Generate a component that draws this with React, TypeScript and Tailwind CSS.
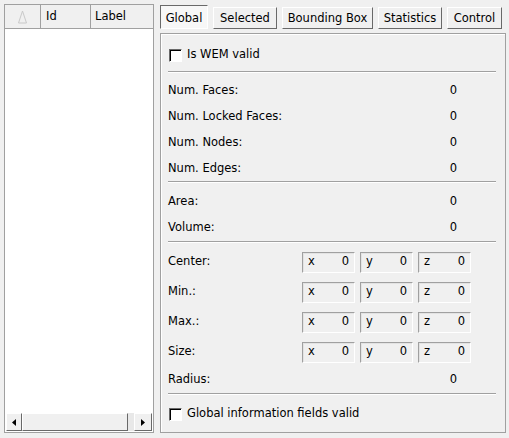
import React from "react";

const font = { fontFamily: "Tahoma, 'DejaVu Sans', 'Liberation Sans', sans-serif" };

function Raised({ children, className = "" }: { children?: React.ReactNode; className?: string }) {
  return (
    <div className={"border border-t-white border-l-white border-r-[#696969] border-b-[#696969] bg-[#f0f0f0] " + className}>
      {children}
    </div>
  );
}

function Check({ label }: { label: string }) {
  return (
    <div className="flex items-center h-[26px]">
      <div className="w-[13px] h-[13px] border border-t-[#696969] border-l-[#696969] border-r-white border-b-white bg-white ml-[1px] shadow-[inset_1px_1px_0_#000]" />
      <span className="ml-[5px]">{label}</span>
    </div>
  );
}

function Sep() {
  return <div className="h-[2px] border-t border-t-[#a0a0a0] border-b border-b-white mr-[2px]" />;
}

function Row({ label, value = "0" }: { label: string; value?: string }) {
  return (
    <div className="flex items-center h-[26px]">
      <span className="w-[269px]">{label}</span>
      <span className="w-[20px] text-right">{value}</span>
    </div>
  );
}

function VBox({ axis }: { axis: string }) {
  return (
    <div className="w-[53px] h-[21px] flex items-center justify-between px-[5px] border border-t-[#a0a0a0] border-l-[#a0a0a0] border-r-white border-b-white shadow-[inset_1px_1px_0_#e3e3e3]">
      <span>{axis}</span>
      <span>0</span>
    </div>
  );
}

function VecRow({ label }: { label: string }) {
  return (
    <div className="flex items-center h-[30px]">
      <span className="w-[134px]">{label}</span>
      <div className="flex gap-[5px]">
        <VBox axis="x" />
        <VBox axis="y" />
        <VBox axis="z" />
      </div>
    </div>
  );
}

function Tab({ label, w, active }: { label: string; w: number; active?: boolean }) {
  return (
    <div
      style={{ width: w }}
      className={
        "flex items-center justify-center border " +
        (active
          ? "border-t-[#696969] border-l-[#696969] border-r-white border-b-white bg-[#f7f7f7] h-[24px]"
          : "h-[22px] border-t-white border-l-white border-r-[#696969] border-b-[#696969] bg-[#f0f0f0]")
      }
    >
      <span className={active ? "mt-[3px]" : "mt-[1px]"}>{label}</span>
    </div>
  );
}

export default function App() {
  return (
    <div style={font} className="w-[509px] h-[438px] bg-[#f0f0f0] text-[11.5px] text-black flex pt-[4px] pl-[4px] overflow-hidden">
      {/* Left list */}
      <div className="w-[150px] h-[429px] flex flex-col border border-[#a0a0a0] bg-white">
        <div className="flex h-[24px] bg-[#f0f0f0] border-b border-b-[#a0a0a0]">
          <div className="w-[36px] border-r border-r-[#a0a0a0] flex items-center justify-center">
            <svg width="9" height="14" viewBox="0 0 9 14"><path d="M4.5 1 L0.5 13 M4.5 1 L8.5 13 M0.5 13 H8.5" stroke="#c8c8c8" fill="none" strokeWidth="1" /></svg>
          </div>
          <div className="w-[50px] border-r border-r-[#a0a0a0] flex items-center pl-[5px] pt-[1px]">Id</div>
          <div className="flex-1 flex items-center pl-[4px] pt-[1px]">Label</div>
        </div>
        <div className="flex-1" />
        <div className="flex h-[18px] mb-[1px] mx-[1px] bg-[#f0f0f0]">
          <Raised className="w-[16px] h-[18px] flex items-center justify-center">
            <svg width="4" height="7" viewBox="0 0 4 7"><path d="M4 0 L0 3.5 L4 7Z" fill="#000" /></svg>
          </Raised>
          <Raised className="w-[106px] h-[18px]" />
          <div className="flex-1 bg-[#e8e8e8]" />
          <Raised className="w-[18px] h-[18px] flex items-center justify-center">
            <svg width="4" height="7" viewBox="0 0 4 7"><path d="M0 0 L4 3.5 L0 7Z" fill="#000" /></svg>
          </Raised>
        </div>
      </div>

      {/* Right side */}
      <div className="ml-[6px] flex flex-col">
        <div className="flex items-start gap-[5px] h-[29px] pt-[1px]">
          <Tab label="Global" w={48} active />
          <div className="mt-[2px] flex gap-[5px]">
            <Tab label="Selected" w={64} />
            <Tab label="Bounding Box" w={91} />
            <Tab label="Statistics" w={64} />
            <Tab label="Control" w={55} />
          </div>
        </div>
        <div className="w-[346px] h-[400px] border border-[#a0a0a0] shadow-[inset_1px_1px_0_white] px-[7px] pt-[8px] flex flex-col">
          <Check label="Is WEM valid" />
          <div className="mt-[3px]"><Sep /></div>
          <div className="mt-[5px]">
            <Row label="Num. Faces:" />
            <Row label="Num. Locked Faces:" />
            <Row label="Num. Nodes:" />
            <Row label="Num. Edges:" />
          </div>
          <div className="-mt-px"><Sep /></div>
          <div className="mt-[6px]">
            <Row label="Area:" />
            <Row label="Volume:" />
          </div>
          <div className="mt-0"><Sep /></div>
          <div className="mt-[4px]">
            <VecRow label="Center:" />
            <VecRow label="Min.:" />
            <VecRow label="Max.:" />
            <VecRow label="Size:" />
            <Row label="Radius:" />
          </div>
          <div className="mt-0"><Sep /></div>
          <div className="mt-[6px]">
            <Check label="Global information fields valid" />
          </div>
        </div>
      </div>
    </div>
  );
}
